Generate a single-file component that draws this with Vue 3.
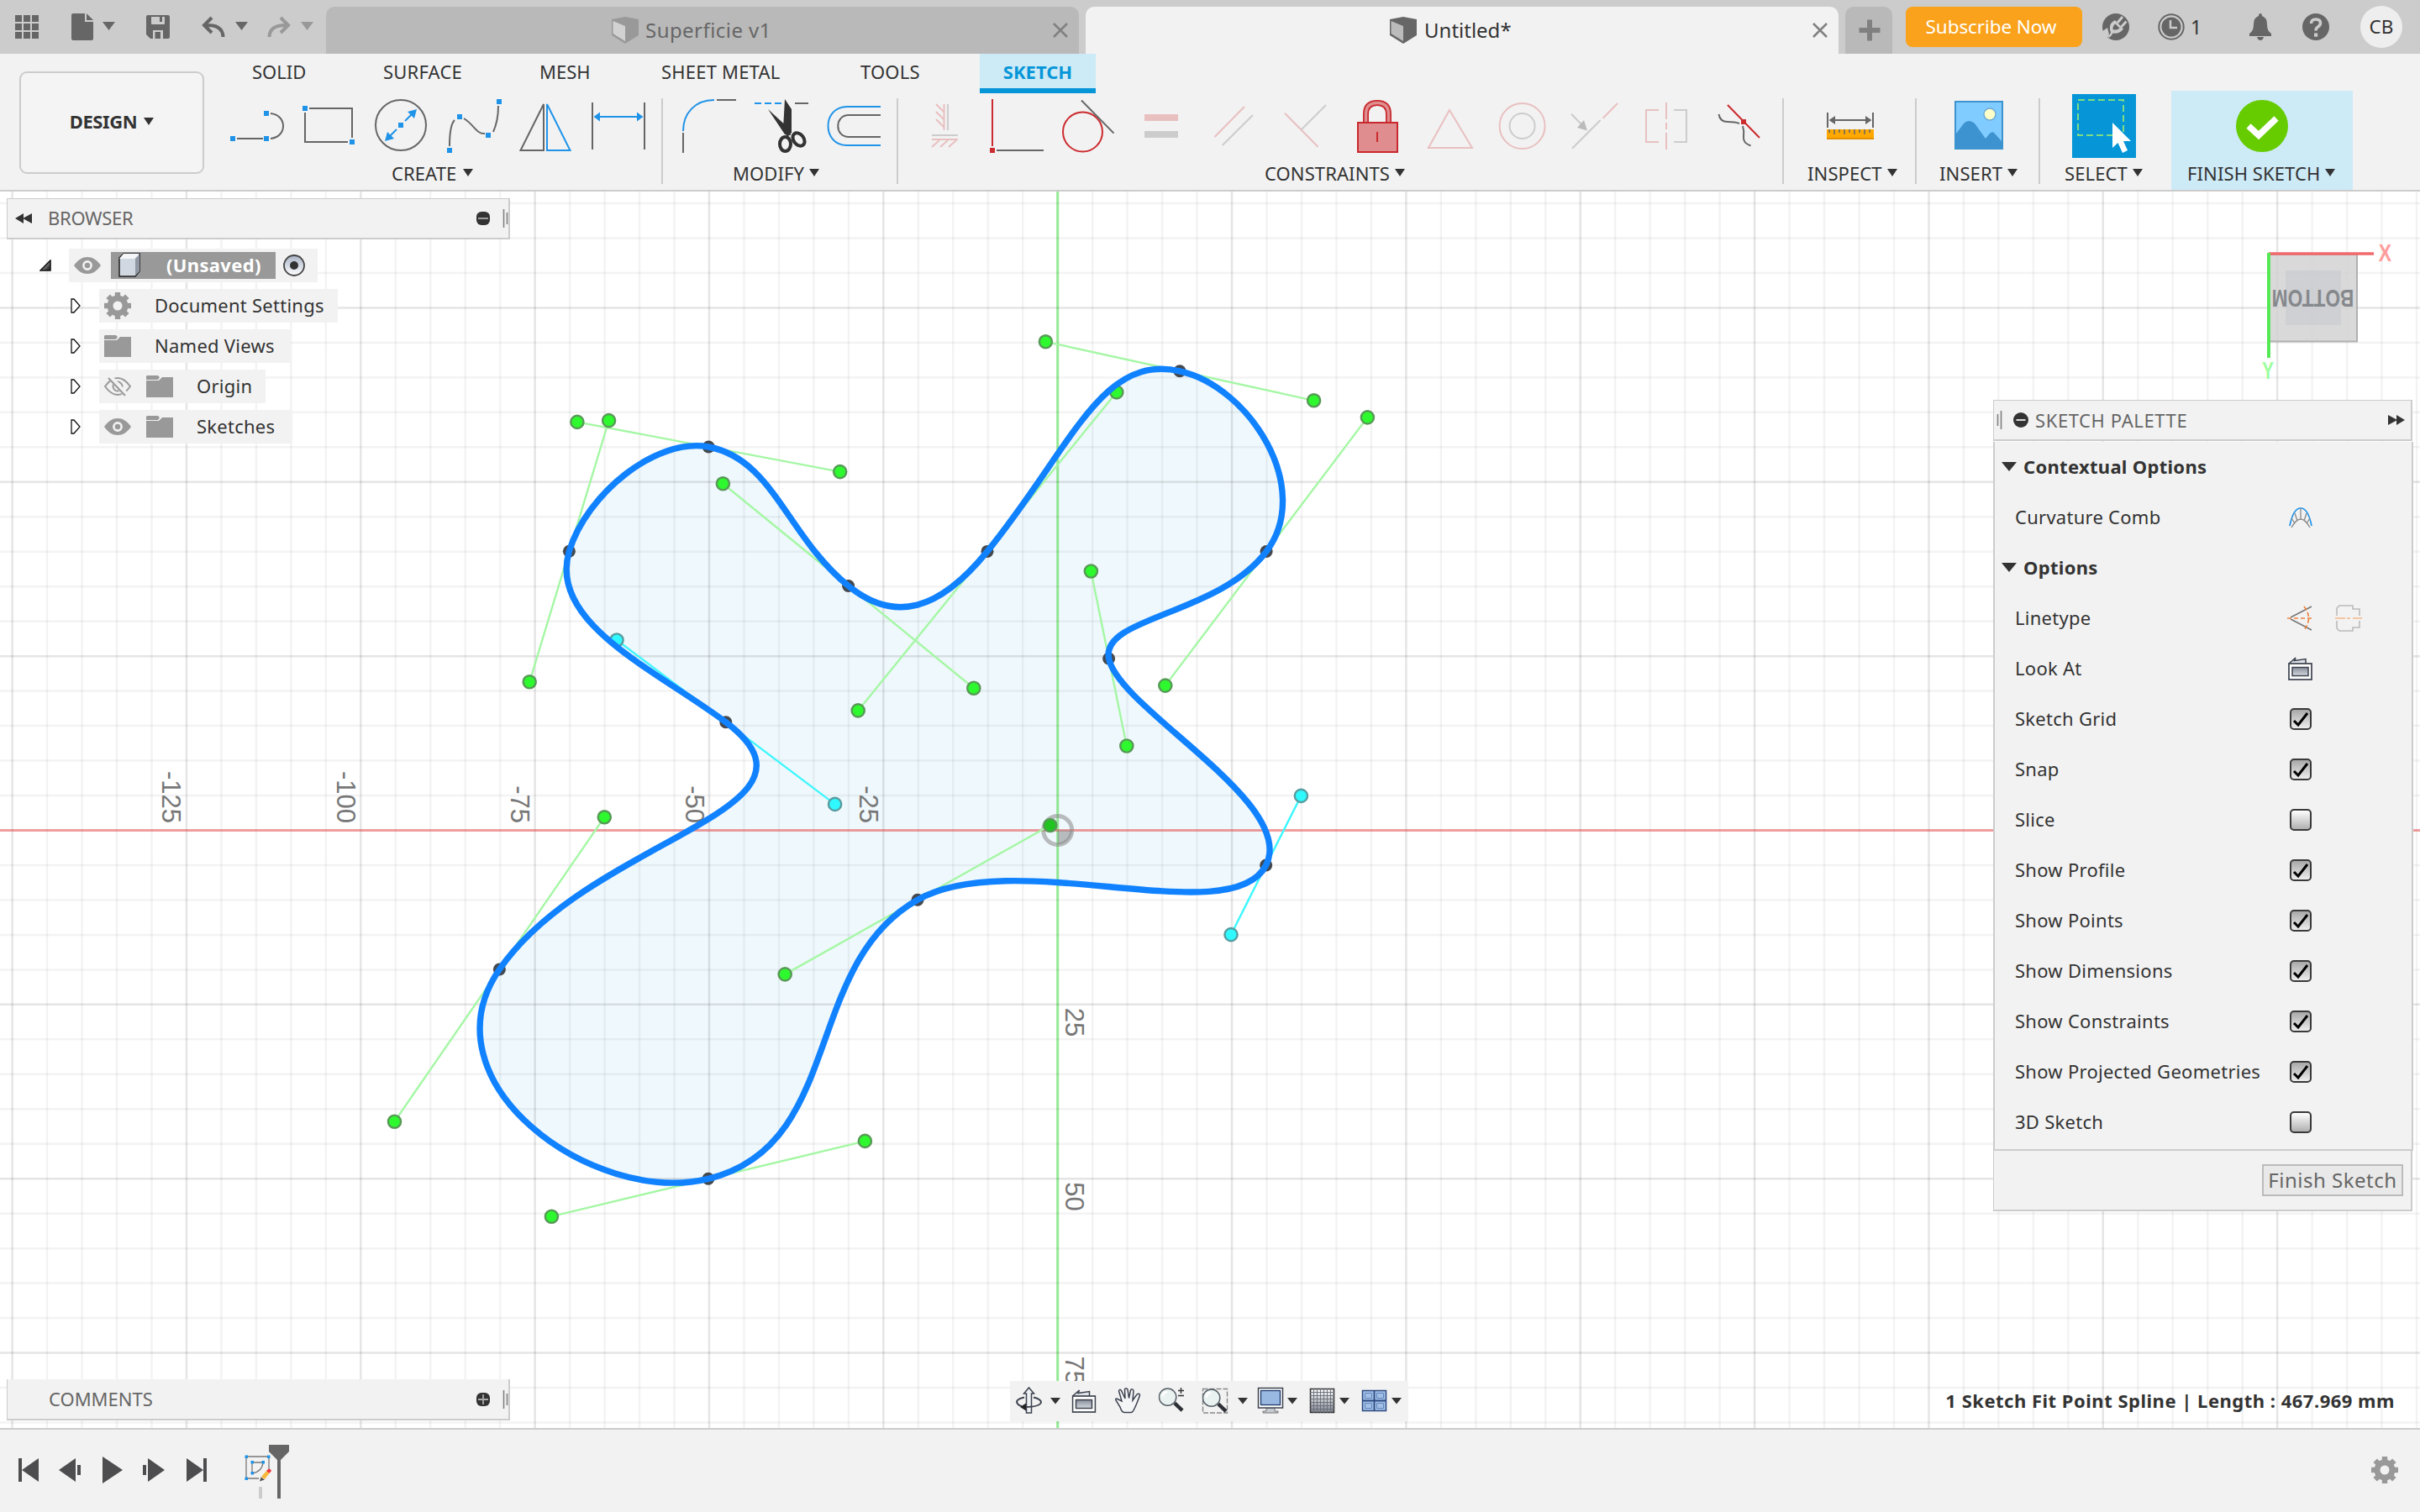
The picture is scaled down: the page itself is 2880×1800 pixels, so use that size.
<script setup>
const ORIGIN = { x: 1258.7, y: 988.5 }
const MAJOR = 207.35
const MINOR = MAJOR / 5

const gridX = []
for (let i = -30; i <= 39; i++) {
  gridX.push({ pos: ORIGIN.x + i * MINOR, major: i % 5 === 0, axis: i === 0 })
}
const gridY = []
for (let i = -18; i <= 17; i++) {
  gridY.push({ pos: ORIGIN.y + i * MINOR, major: i % 5 === 0, axis: i === 0 })
}

const xLabels = [-125, -100, -75, -50, -25].map((v, i) => ({
  text: String(v),
  x: ORIGIN.x + (i - 5) * MAJOR - 28.5,
  y: 980
}))
const yLabels = [25, 50, 75].map((v, i) => ({
  text: String(v),
  x: ORIGIN.x + 9,
  y: ORIGIN.y + (i + 1) * MAJOR + 4
}))

// Fit points with their tangent vectors; "out" / "in" override the chord-based weights.
const fitPoints = [
  { x: 1404, y: 441.8, dx: 159.6, dy: 35, in: 0.59, out: 0.52 },
  { x: 1507.1, y: 656.5, dx: -120.3, dy: 159.6, in: 0.47 },
  { x: 1319.6, y: 784, dx: 21.2, dy: 104, out: 0.58 },
  { x: 1506.7, y: 1030, dx: -41.7, dy: 82.6, in: 0.9, out: 0.97, active: true },
  { x: 1092, y: 1071.2, dx: -157.8, dy: 88.7, in: 0.73 },
  { x: 842.9, y: 1403.3, dx: -186.5, dy: 44.9 },
  { x: 594.4, y: 1154, dx: 124.9, dy: -181.2, out: 0.87 },
  { x: 863.8, y: 859.7, dx: -129.8, dy: -97.7, in: 1.08, out: 0.63, active: true },
  { x: 677.4, y: 656.2, dx: 47.2, dy: -155.6, in: 0.55 },
  { x: 843.3, y: 532, dx: 156.4, dy: 29.6, in: 0.4 },
  { x: 1009.6, y: 697.5, dx: 149.2, dy: 121.7, out: 0.37 },
  { x: 1175, y: 656.4, dx: 153.8, dy: -189.5, in: 0.37 }
]

const segments = fitPoints.map((p, i) => {
  const q = fitPoints[(i + 1) % fitPoints.length]
  const k = Math.hypot(q.x - p.x, q.y - p.y) * 0.0021
  const a = p.out ?? k
  const b = q.in ?? k
  return `C${p.x + p.dx * a} ${p.y + p.dy * a} ${q.x - q.dx * b} ${q.y - q.dy * b} ${q.x} ${q.y}`
})
const splinePath = `M${fitPoints[0].x} ${fitPoints[0].y}${segments.join('')}Z`

const menuTabs = ['SOLID', 'SURFACE', 'MESH', 'SHEET METAL', 'TOOLS', 'SKETCH']

const treeRows = [
  { label: 'Document Settings', icon: 'gear', cls: 'w1' },
  { label: 'Named Views', icon: 'folder', cls: 'w2' },
  { label: 'Origin', eye: 'off', icon: 'folder', cls: 'w3' },
  { label: 'Sketches', eye: 'on', icon: 'folder', cls: 'w4' }
]

const options = [
  { label: 'Sketch Grid', on: true },
  { label: 'Snap', on: true },
  { label: 'Slice', on: false },
  { label: 'Show Profile', on: true },
  { label: 'Show Points', on: true },
  { label: 'Show Dimensions', on: true },
  { label: 'Show Constraints', on: true },
  { label: 'Show Projected Geometries', on: true },
  { label: '3D Sketch', on: false }
]
const gearTeeth = [0, 45, 90, 135, 180, 225, 270, 315]
</script>

<template>
  <div class="app">
    <svg class="defs" width="0" height="0">
      <defs>
        <linearGradient id="slate" x1="0" y1="0" x2="0" y2="1"><stop offset="0" stop-color="#878e9a" /><stop offset="1" stop-color="#d5dae0" /></linearGradient>
        <linearGradient id="mesh" x1="0" y1="0" x2="0" y2="1"><stop offset="0" stop-color="#fff" /><stop offset="1" stop-color="#80858f" /></linearGradient>
        <linearGradient id="tri" x1="0" y1="0" x2="1" y2="1"><stop offset="0" stop-color="#fff" /><stop offset=".8" stop-color="#333" /></linearGradient>
        <linearGradient id="radio" x1="0" y1="0" x2="0" y2="1"><stop offset="0" stop-color="#a9b3c6" /><stop offset="1" stop-color="#fff" /></linearGradient>
        <symbol id="gear" viewBox="-16 -16 32 32">
          <circle r="9" fill="none" stroke="#999" stroke-width="7" />
          <rect v-for="a in gearTeeth" :key="a" x="-3.2" y="-16" width="6.4" height="8" fill="#999" :transform="`rotate(${a})`" />
        </symbol>
        <symbol id="folder" viewBox="0 0 32 26">
          <path d="M1 0H14L16 2L14 5H0V1Z" fill="#999" />
          <path d="M0 6H15L19 2H32V26H0Z" fill="#999" />
        </symbol>
        <symbol id="eye" viewBox="0 0 32 20">
          <path d="M0 10C5 3 10 0 16 0S27 3 32 10C27 17 22 20 16 20S5 17 0 10Z" fill="#999" />
          <circle cx="16" cy="10" r="4.6" fill="none" stroke="#f2f2f2" stroke-width="2.6" />
        </symbol>
        <symbol id="eyeoff" viewBox="0 0 32 24">
          <path d="M1 12C6 5 11 2 16 2S26 5 31 12C26 19 21 22 16 22S6 19 1 12Z" fill="none" stroke="#999" stroke-width="2" />
          <circle cx="16" cy="12" r="5.5" fill="none" stroke="#999" stroke-width="2" />
          <path d="M7 1L27 23" stroke="#f2f2f2" stroke-width="6" /><path d="M5 2L25 23" stroke="#999" stroke-width="2" />
        </symbol>
        <symbol id="lookat" viewBox="0 0 29 28">
          <path d="M1 8L9 1L7.5 4.5L21 2.5V8" fill="#dfe3e8" stroke="#3c424e" stroke-width="1.5" />
          <rect x="1" y="8" width="27" height="19" fill="#fff" stroke="#3c424e" stroke-width="1.7" />
          <rect x="5" y="12.5" width="19" height="10" fill="url(#slate)" stroke="#3c424e" stroke-width="1.5" />
        </symbol>
        <symbol id="glass" viewBox="0 0 32 32">
          <circle cx="11.5" cy="11.5" r="10.5" fill="#e9f2f0" stroke="#555e66" stroke-width="1.5" />
          <path d="M5 11A7 7 0 0 1 11 5" fill="none" stroke="#fff" stroke-width="2.5" />
          <path d="M20 19L29.5 28" stroke="#2c3036" stroke-width="4.5" />
        </symbol>
      </defs>
    </svg>

    <header class="titlebar">
      <div class="quick">
        <svg viewBox="0 0 388 64" width="388" height="64">
          <g fill="#666">
            <template v-for="r in 3" :key="r"><rect v-for="c in 3" :key="c" :x="8 + c * 10" :y="8 + r * 10" width="8" height="8" /></template>
            <path d="M85 18Q85 16 87 16H101V26H111V46Q111 48 109 48H87Q85 48 85 46Z" />
            <path d="M103 16L111 24H103Z" /><path d="M122 26H137L129.500 36Z" />
            <path fill-rule="evenodd" d="M176 18H200Q202 18 202 20V44Q202 46 200 46H179L174 41V20Q174 18 176 18ZM180 20V28Q180 29 181 29H195Q196 29 196 28V20H193V26H190V20ZM182 46H184.500V38H191V46H194V36H182Z" />
            <path d="M280 26H295L287.500 36Z" />
          </g>
          <path d="M252 21L243 30L252 39M244 30Q265 29 265.500 44" fill="none" stroke="#666" stroke-width="4" />
          <path d="M334 21L343 30L334 39M342 30Q321 29 320.500 44" fill="none" stroke="#999" stroke-width="4" />
          <path d="M358 26H373L365.500 36Z" fill="#999" />
        </svg>
      </div>
      <div class="tab idle">
        <svg class="cube1" viewBox="0 0 32 32" width="32" height="32"><path d="M0 3L16 0L32 3V22L16 32L0 22Z" fill="#999" /><path d="M1.500 5L16 11V29L1.500 20Z" fill="#d2d2d2" /></svg>
        <span class="t1">Superficie v1</span>
        <svg class="close" viewBox="0 0 18 18" width="18" height="18"><path d="M1 1L17 17M17 1L1 17" stroke="#808080" stroke-width="2.500" /></svg>
      </div>
      <div class="tab current">
        <svg class="cube2" viewBox="0 0 32 32" width="32" height="32"><path d="M0 3L16 0L32 3V22L16 32L0 22Z" fill="#666" /><path d="M1.500 5L16 11V29L1.500 20Z" fill="#bbb" /></svg>
        <span class="t2">Untitled*</span>
        <svg class="close" viewBox="0 0 18 18" width="18" height="18"><path d="M1 1L17 17M17 1L1 17" stroke="#808080" stroke-width="2.500" /></svg>
      </div>
      <div class="newtab"><svg viewBox="0 0 26 26" width="26" height="26"><path d="M13 .500V25.500M.500 13H25.500" stroke="#808080" stroke-width="6" /></svg></div>
      <button class="subscribe">Subscribe Now</button>
      <div class="status-icons">
        <svg class="i-plug" viewBox="0 0 32 32" width="32" height="32">
          <circle cx="16" cy="16" r="16" fill="#666" />
          <path d="M-1 22L6 17L8 25L5 31Z" fill="#ccc" />
          <path d="M7 28Q13 24 10.500 20" fill="none" stroke="#ccc" stroke-width="2.500" />
          <path d="M9 20Q8 11 15 8L25 18.500Q20 25 12 23.500Z" fill="#ccc" />
          <path d="M12.500 19Q12 14.500 15.500 12.500L20.500 17.500Q17.500 20.500 12.500 19Z" fill="#666" />
          <path d="M18 11L24 4M22.500 16L28.500 9.500" stroke="#ccc" stroke-width="3" />
        </svg>
        <svg class="i-clock" viewBox="0 0 32 32" width="32" height="32"><circle cx="16" cy="16" r="14.700" fill="none" stroke="#666" stroke-width="2" /><circle cx="16" cy="16" r="11.500" fill="#666" /><path d="M15 8V17H23" fill="none" stroke="#ccc" stroke-width="2.500" /></svg>
        <span class="jobs">1</span>
        <svg class="i-bell" viewBox="0 0 26 32" width="26" height="32"><path d="M11 3Q11 0 13 0T15 3Q21 5 21 13Q21 21 26 24V27H0V24Q5 21 5 13Q5 5 11 3ZM9 28H17Q16 32 13 32T9 28Z" fill="#666" /></svg>
        <svg class="i-help" viewBox="0 0 32 32" width="32" height="32"><circle cx="16" cy="16" r="16" fill="#666" /><path d="M10.500 12Q10.500 7 16 7T21.500 11.500Q21.500 14 18.500 16Q16 17.500 16 20.500" fill="none" stroke="#ccc" stroke-width="3.500" /><rect x="14" y="23.500" width="4.200" height="4.200" fill="#ccc" /></svg>
        <span class="avatar">CB</span>
      </div>
    </header>

    <section class="ribbon">
      <button class="design"><span>DESIGN</span><i class="caret"></i></button>
      <div class="ribbon-main">
        <nav class="menu">
          <span v-for="(t, i) in menuTabs" :key="t" :class="['m' + i, { sel: t === 'SKETCH' }]">{{ t }}</span>
        </nav>
        <div class="groups">
          <div class="group create">
            <div class="icons">
              <svg viewBox="264 108 86 84"><path d="M282 165H313M322 135C342 137 342 163 322 165" class="g" /><path d="M274 162h6v6h-6zM314 162h6v6h-6zM314 132h6v6h-6z" class="bf" /></svg>
              <svg viewBox="350 108 86 84"><path d="M368 129H419V164M363 134V169H414" class="g" /><path d="M360 126h6v6h-6zM416 166h6v6h-6z" class="bf" /></svg>
              <svg viewBox="436 108 86 84"><circle cx="477" cy="149" r="30" class="g" /><path d="M482 144L490 136M472 154L464 162" class="b" /><path d="M474 146h6v6h-6zM496 130L493 141L485 133ZM458 168L461 157L469 165Z" class="bf" /></svg>
              <svg viewBox="522 108 86 84"><path d="M535 174C535 158 537 147 541 143M552 141C564 148 567 160 577 159M587 157C592 146 593 138 593 126" class="g" /><path d="M591 118h6v6h-6zM544 136h6v6h-6zM578 158h6v6h-6zM532 176h6v6h-6z" class="bf" /></svg>
              <svg viewBox="608 108 86 84"><path d="M647 124V179H619.500Z" class="g" /><path d="M651 124V179H678.500Z" class="b" /></svg>
              <svg viewBox="694 108 86 84"><path d="M705 122V178M767 122V178" class="g" /><path d="M712 139H760" class="b" /><path d="M706.500 139L714 133.500V144.500ZM765.500 139L758 133.500V144.500Z" class="bf" /></svg>
            </div>
            <div class="label"><span>CREATE</span><i class="caret"></i></div>
          </div>
          <div class="group modify">
            <div class="icons">
              <svg viewBox="799 108 86 84"><path d="M813 156C813 135 827 119 850 119" class="b" /><path d="M853 119H876M813 158V182" class="g" /></svg>
              <svg viewBox="885 108 86 84"><path d="M898 123H930" class="b" stroke-dasharray="8 4" /><path d="M946 123H962" class="g" /><path d="M934 118L942 130V158L937 163L932 154ZM914 130L939 153L941 161L934 160Z" fill="#333" /><ellipse cx="934.500" cy="171.500" rx="6.500" ry="8.500" fill="none" stroke="#333" stroke-width="4" /><ellipse cx="950.500" cy="166" rx="6" ry="8.500" fill="none" stroke="#333" stroke-width="4" transform="rotate(-38 950.500 166)" /></svg>
              <svg viewBox="971 108 86 84"><path d="M1048 127H1008C978 127 978 173 1008 173H1048" class="b" /><path d="M1048 137H1010C993 137 993 163 1010 163H1048" class="g" /></svg>
            </div>
            <div class="label"><span>MODIFY</span><i class="caret"></i></div>
          </div>
          <div class="group constraints">
            <div class="icons">
              <svg viewBox="1082 108 86 84"><path d="M1123.500 124V155M1114 124L1123 133M1114 133L1123 142M1114 142L1123 151M1109 166H1140M1109 175L1118 167M1119 175L1128 167M1129 175L1138 167" class="p" /><path d="M1128 124V155M1109 161H1140" class="l" /></svg>
              <svg viewBox="1168 108 86 84"><path d="M1181 118V174" class="r" /><path d="M1178 176h6v6h-6z" class="rf" /><path d="M1186 179H1242" class="g" /></svg>
              <svg viewBox="1254 108 86 84"><circle cx="1288.500" cy="157" r="23.500" class="r" /><path d="M1287 119.500L1325.500 158.600" class="g" /></svg>
              <svg viewBox="1340 108 86 84"><path d="M1362 136h40v8h-40z" fill="#e9c0c0" /><path d="M1362 156h40v8h-40z" fill="#ccc" /></svg>
              <svg viewBox="1426 108 86 84"><path d="M1445.500 163L1481 127" class="p" /><path d="M1454.700 173L1491 137" class="l" /></svg>
              <svg viewBox="1512 108 86 84"><path d="M1529 134.700L1568.500 174.700" class="p" /><path d="M1549 154L1578 125" class="l" /></svg>
              <svg viewBox="1598 108 86 84"><path d="M1625.500 146V136Q1625.500 122.500 1639 122.500T1652.500 136V146" fill="none" stroke="#c9282d" stroke-width="7" /><path d="M1625.500 146V136Q1625.500 122.500 1639 122.500T1652.500 136V146" fill="none" stroke="#df8d8e" stroke-width="3.500" /><path d="M1616 146H1663V181H1616Z" fill="#df8d8e" stroke="#c9282d" stroke-width="2" /><path d="M1639 157V169" class="r" /></svg>
              <svg viewBox="1684 108 86 84"><path d="M1725 131L1752 176H1700Z" class="p" /></svg>
              <svg viewBox="1770 108 86 84"><circle cx="1811.600" cy="150" r="27" class="p" /><circle cx="1811.600" cy="150" r="15" class="l" /></svg>
              <svg viewBox="1856 108 86 84"><path d="M1871 176.700L1904.600 143M1870 135.700L1884 150" class="l" /><path d="M1889 155.500L1877 152L1885 143Z" fill="#bbb" /><path d="M1907.700 140.700L1925 123" class="p" /></svg>
              <svg viewBox="1942 108 86 84"><path d="M1974 131H1959V169H1974M1983 122V142M1983 146V154M1983 158V178" class="p" /><path d="M1992 131H2007V169H1992" class="l" /></svg>
              <svg viewBox="2028 108 86 84"><path d="M2045.500 136Q2047 145 2056 145T2070 147M2074 150Q2076 156 2075 163T2083.500 173.500" class="g" /><path d="M2056 125L2094 164" class="r" /><path d="M2072 142h6v6h-6z" class="rf" /></svg>
            </div>
            <div class="label"><span>CONSTRAINTS</span><i class="caret"></i></div>
          </div>
          <div class="group inspect">
            <div class="icons">
              <svg viewBox="2159 108 86 84"><path d="M2175 134V152M2229 134V152M2180 143H2224" class="g" /><path d="M2176.500 143L2184 138V148ZM2227.500 143L2220 138V148Z" fill="#666" /><path d="M2174 154h56v12h-56z" fill="#ffa900" /><path d="M2174 164h56v2h-56z" fill="#e29000" /><path d="M2177 154v4M2183 154v6M2189 154v4M2195 154v6M2201 154v4M2207 154v6M2213 154v4M2219 154v6M2225 154v4" stroke="#666" stroke-width="1.500" /></svg>
            </div>
            <div class="label"><span>INSPECT</span><i class="caret"></i></div>
          </div>
          <div class="group insert">
            <div class="icons">
              <svg viewBox="2312 108 86 84"><path d="M2326 120h58v58h-58z" fill="#3d93cf" /><path d="M2328 122H2382V168L2373 158Q2370 156 2367 160L2363 165L2350 147Q2343 141 2337 147L2328 159Z" fill="#80cbff" /><circle cx="2368" cy="136" r="7" fill="#ffffc9" stroke="#6fabd6" stroke-width="1.500" /></svg>
            </div>
            <div class="label"><span>INSERT</span><i class="caret"></i></div>
          </div>
          <div class="group select">
            <div class="icons">
              <svg viewBox="2461 108 86 84"><path d="M2466 112h76v76h-76z" fill="#0696d7" /><path d="M2473 119H2527V161H2473Z" fill="none" stroke="#7ddc84" stroke-width="2" stroke-dasharray="8 4" /><path d="M2514 146V176L2520.500 170L2526 182L2532 179L2527 168H2536Z" fill="#fff" /></svg>
            </div>
            <div class="label"><span>SELECT</span><i class="caret"></i></div>
          </div>
          <div class="group finish">
            <div class="icons">
              <svg viewBox="2649 108 86 84"><circle cx="2692" cy="150" r="31" fill="#6c0" /><path d="M2676 150L2688 161L2709 141" fill="none" stroke="#fff" stroke-width="7.500" /></svg>
            </div>
            <div class="label"><span>FINISH SKETCH</span><i class="caret"></i></div>
          </div>
        </div>
      </div>
    </section>

    <main class="viewport">
      <svg class="canvas" viewBox="0 228 2880 1472" width="2880" height="1472">
        <path :d="splinePath" fill="#eff8fc" />
        <g>
          <line v-for="g in gridX" :key="'x' + g.pos" :x1="g.pos" :x2="g.pos" y1="228" y2="1700" :class="g.axis ? 'ay' : g.major ? 'maj' : 'min'" />
          <line v-for="g in gridY" :key="'y' + g.pos" :y1="g.pos" :y2="g.pos" x1="0" x2="2880" :class="g.axis ? 'ax' : g.major ? 'maj' : 'min'" />
        </g>
        <circle :cx="ORIGIN.x" :cy="ORIGIN.y" r="17" fill="none" stroke="#888" stroke-opacity=".55" stroke-width="5" />
        <path :d="`M${ORIGIN.x} ${ORIGIN.y}h17a17 17 0 0 1 -17 17z`" fill="#888" fill-opacity=".55" />
        <text v-for="l in xLabels" :key="l.text" class="axis-label" text-anchor="end" :transform="`translate(${l.x} ${l.y}) rotate(90)`">{{ l.text }}</text>
        <text v-for="l in yLabels" :key="l.text" class="axis-label" :transform="`translate(${l.x} ${l.y}) rotate(90)`">{{ l.text }}</text>
        <line v-for="(p, i) in fitPoints" :key="'h' + i" :x1="p.x - p.dx" :y1="p.y - p.dy" :x2="p.x + p.dx" :y2="p.y + p.dy" :stroke="p.active ? '#3ff7ff' : '#a5f7a5'" stroke-width="2.400" />
        <template v-for="(p, i) in fitPoints" :key="'e' + i">
          <circle v-for="s in [-1, 1]" :key="s" :cx="p.x + s * p.dx" :cy="p.y + s * p.dy" r="7.600" :fill="p.active ? '#2ff8ff' : i === 4 && s === -1 ? '#1fc41f' : '#2ef82e'" :stroke="p.active ? '#569c9f' : '#579957'" stroke-width="2.400" />
          <circle :cx="p.x" :cy="p.y" r="7.500" fill="#44494f" />
        </template>
        <path :d="splinePath" fill="none" stroke="#1182ff" stroke-width="7.400" />
      </svg>

      <svg class="viewcube" viewBox="2680 280 180 180" width="180" height="180">
        <path d="M2701 303H2805V406.500H2701Z" fill="#d2d2d2" fill-opacity=".85" stroke="#b0b0b0" stroke-width="2" />
        <path d="M2720 322h66v65h-66z" fill="#c9ccd0" fill-opacity=".7" />
        <text class="face" text-anchor="middle" transform="translate(2752.500 345) rotate(180) scale(.78 1)">BOTTOM</text>
        <path d="M2700 302H2825" stroke="#f0696b" stroke-width="3.500" /><path d="M2700 301V426" stroke="#55ea55" stroke-width="4" />
        <text transform="translate(2838.500 311) scale(.82 1.050)" class="ax-name" text-anchor="middle" fill="#ff9d9d">X</text>
        <text transform="translate(2699 451) scale(.75 1.050)" class="ax-name" text-anchor="middle" fill="#9dff9d">Y</text>
      </svg>

      <aside class="browser">
        <div class="bar top">
          <svg class="chev" viewBox="0 0 20 12" width="20" height="12"><path d="M0 6L10 0V12ZM9 6L20 0V12Z" fill="#333" /></svg>
          <span class="bar-title">BROWSER</span>
          <svg class="knob" viewBox="0 0 16 16" width="16" height="16"><rect width="16" height="16" rx="6" fill="#333" /><path d="M2 8H14" stroke="#aaa" stroke-width="1.800" /></svg>
          <svg class="grip" viewBox="0 0 8 22" width="8" height="22"><path d="M1.500 0V22M5.500 4V18" stroke="#808080" stroke-width="1.600" /></svg>
        </div>
        <div class="node root">
          <svg class="arrow" viewBox="0 0 14 14" width="14" height="14"><path d="M13 1V13H1Z" fill="url(#tri)" stroke="#111" stroke-width="1.500" /></svg>
          <div class="chip">
            <svg width="32" height="20"><use href="#eye" width="32" height="20" /></svg>
            <div class="doc">
              <svg viewBox="0 0 26 30" width="26" height="30"><path d="M1 6L6 1H25V22L20 28H1Z" fill="#d2d8e1" stroke="#222" stroke-width="1.500" /><path d="M1 7H19L25 1H6Z" fill="#f4f6f8" /><path d="M20 7L25 2V22L20 27Z" fill="#9098a4" /></svg>
              <b>(Unsaved)</b>
            </div>
            <svg viewBox="0 0 28 28" width="28" height="28"><circle cx="14" cy="14" r="12" fill="url(#radio)" stroke="#444" stroke-width="1.800" /><circle cx="14" cy="14" r="5" fill="#333" /></svg>
          </div>
        </div>
        <div v-for="r in treeRows" :key="r.label" class="node child">
          <svg class="arrow" viewBox="0 0 12 18" width="12" height="18"><path d="M1 1V17H4L11 9L4 1Z" fill="#fff" stroke="#111" stroke-width="1.300" /></svg>
          <div :class="['chip', r.cls]">
            <svg v-if="r.eye === 'on'" class="eye" width="32" height="20"><use href="#eye" width="32" height="20" /></svg>
            <svg v-if="r.eye === 'off'" class="eye" width="32" height="24"><use href="#eyeoff" width="32" height="24" /></svg>
            <svg v-if="r.icon === 'gear'" width="32" height="32"><use href="#gear" width="32" height="32" /></svg>
            <svg v-else width="32" height="26"><use href="#folder" width="32" height="26" /></svg>
            <span>{{ r.label }}</span>
          </div>
        </div>
      </aside>

      <aside class="palette">
        <div class="pal-head">
          <svg class="grip" viewBox="0 0 8 22" width="8" height="22"><path d="M2.500 4V18M6.500 0V22" stroke="#808080" stroke-width="1.600" /></svg>
          <svg class="pk" viewBox="0 0 18 18" width="18" height="18"><circle cx="9" cy="9" r="9" fill="#333" /><path d="M3.500 9H14.500" stroke="#ddd" stroke-width="2" /></svg>
          <span class="pal-title">SKETCH PALETTE</span>
          <svg class="fwd" viewBox="0 0 20 12" width="20" height="12"><path d="M0 0L11 6L0 12ZM10 0L20 6L10 12Z" fill="#333" /></svg>
        </div>
        <div class="pal-body">
          <div class="sect"><i></i><span>Contextual Options</span></div>
          <div class="opt"><span>Curvature Comb</span>
            <svg class="oi" viewBox="0 0 30 26" width="30" height="26"><path d="M2 23C5 8 10 2 15 2S25 8 28 23" fill="none" stroke="#1f93e8" stroke-width="1.700" /><path d="M4 25C8 18 12 15 15 15S22 18 26 25M15 2V15M8 8L11 17M22 8L19 17M4 14L8 20M26 14L22 20" fill="none" stroke="#888" stroke-width="1.300" /></svg>
          </div>
          <div class="sect"><i></i><span>Options</span></div>
          <div class="opt"><span>Linetype</span>
            <svg class="oi lt" viewBox="0 0 32 32" width="32" height="32"><path d="M29 2L4 15M4 17L29 30" fill="none" stroke="#777" stroke-width="1.500" /><path d="M0 16H31M20 2Q31 16 20 30" fill="none" stroke="#ee8540" stroke-width="1.700" stroke-dasharray="5 3" /></svg>
            <svg class="oi2" viewBox="0 0 32 32" width="32" height="32"><path d="M2 13V4L5 1H21V5H29V13M2 19V28L5 31H21V27H29V19" fill="none" stroke="#bbb" stroke-width="1.600" /><path d="M0 16H12M14 16H18M21 16H32" stroke="#f3c6a4" stroke-width="1.800" /></svg>
          </div>
          <div class="opt"><span>Look At</span><svg class="oi" width="29" height="28"><use href="#lookat" width="29" height="28" /></svg></div>
          <div v-for="o in options" :key="o.label" class="opt">
            <span>{{ o.label }}</span>
            <div :class="['check', { on: o.on }]"><svg v-if="o.on" viewBox="0 0 22 22" width="22" height="22"><path d="M3 13L8 18L19 4" fill="none" stroke="#000" stroke-width="3" /></svg></div>
          </div>
        </div>
        <div class="pal-foot"><button>Finish Sketch</button></div>
      </aside>

      <div class="comments">
        <span class="bar-title">COMMENTS</span>
        <svg class="knob" viewBox="0 0 16 16" width="16" height="16"><rect width="16" height="16" rx="6" fill="#333" /><path d="M2 8H14M8 2V14" stroke="#aaa" stroke-width="1.800" /></svg>
        <svg class="grip" viewBox="0 0 8 22" width="8" height="22"><path d="M1.500 0V22M5.500 4V18" stroke="#808080" stroke-width="1.600" /></svg>
      </div>

      <div class="navbar">
        <svg viewBox="1202 1644 474 48" width="474" height="48">
          <path d="M1224.500 1652L1230.500 1659H1227.500V1682H1221.500V1659H1218.500Z" fill="#eef0f3" stroke="#3c424e" stroke-width="1.500" />
          <path d="M1219 1663.500C1212 1665 1210 1667 1210 1669Q1211 1673 1216 1674M1230 1663.500C1236 1665 1239 1667 1239 1669.500C1237 1674.500 1228 1675 1220 1675" fill="none" stroke="#3c424e" stroke-width="2" />
          <path d="M1214 1675L1221 1670.500V1679.500Z" fill="#222" />
          <path d="M1250 1664H1262L1256 1671.500Z" fill="#333" />
          <use href="#lookat" x="1275.500" y="1654" width="29" height="28" />
          <path d="M1328 1667Q1327 1665 1329 1665L1335 1668L1331.500 1656Q1332 1653 1334.500 1655.500L1339 1665L1338.500 1654Q1340 1651.500 1342 1654L1343.500 1664.500L1345.500 1655Q1347.500 1652.500 1349 1655.500L1348 1667L1353 1660Q1356 1658 1356.500 1661Q1353 1671 1350 1677Q1348 1681.500 1346 1681.500H1338Q1335 1681.500 1333 1675Z" fill="#f4f5f7" stroke="#3c424e" stroke-width="1.500" />
          <use href="#glass" x="1378.500" y="1652" width="31" height="31" /><path d="M1402 1655.500H1409M1405.500 1652V1659M1402 1661.500H1409" stroke="#333" stroke-width="1.400" />
          <path d="M1431.500 1653.500H1460.500V1682H1431.500Z" fill="none" stroke="#888" stroke-width="1.400" stroke-dasharray="6 2" />
          <use href="#glass" x="1430.500" y="1653" width="31" height="31" />
          <path d="M1473 1664H1485L1479 1671.500Z" fill="#333" />
          <path d="M1507 1676H1517V1680H1521V1682H1503V1680H1507Z" fill="#c6cad1" stroke="#777" stroke-width="1" />
          <rect x="1497.500" y="1652.500" width="29" height="23.500" fill="#fff" stroke="#3c424e" stroke-width="1.500" /><rect x="1500.500" y="1655.500" width="23" height="17" fill="#9ab9e2" stroke="#1d3a6c" stroke-width="1.300" />
          <path d="M1532 1664H1544L1538 1671.500Z" fill="#333" />
          <rect x="1559.500" y="1653.500" width="28" height="28" fill="url(#mesh)" stroke="#333" stroke-width="1.500" />
          <path d="M1563.500 1653V1682M1567.500 1653V1682M1571.500 1653V1682M1575.500 1653V1682M1579.500 1653V1682M1583.500 1653V1682M1559 1657.500H1588M1559 1661.500H1588M1559 1665.500H1588M1559 1669.500H1588M1559 1673.500H1588M1559 1677.500H1588" stroke="#666c78" stroke-width=".9" />
          <path d="M1594 1664H1606L1600 1671.500Z" fill="#333" />
          <rect x="1621.500" y="1655.500" width="28" height="24" fill="#a3bfe6" stroke="#2c4a80" stroke-width="1.500" /><path d="M1635.500 1655V1680M1621 1667.500H1650" stroke="#2c4a80" stroke-width="1.800" />
          <path d="M1624.500 1658.500h8v6h-8zM1638.500 1658.500h8v6h-8zM1624.500 1670.500h8v6h-8zM1638.500 1670.500h8v6h-8z" fill="none" stroke="#5f86bd" stroke-width="1" />
          <path d="M1656 1664H1668L1662 1671.500Z" fill="#333" />
        </svg>
      </div>
      <div class="readout">1 Sketch Fit Point Spline | Length : 467.969 mm</div>
    </main>

    <footer class="timeline">
      <svg viewBox="0 1702 360 98" width="360" height="98">
        <g fill="#4d4d4f">
          <path d="M22 1736h4v28h-4zM46 1736V1764L26 1750ZM90 1736V1764L70 1750ZM92 1744h4v12h-4zM122 1734L146 1750L122 1766ZM170 1744h4v12h-4zM176 1736V1764L196 1750ZM222 1736V1764L242 1750ZM242 1736h4v28h-4z" />
        </g>
        <path d="M293 1734H320V1750M293 1734V1760H308M300 1741H313Q312 1752 300 1754Z" fill="none" stroke="#777" stroke-width="1.300" />
        <path d="M291.500 1732.500h3.500v3.500h-3.500zM318 1732.500h3.500v3.500h-3.500zM291.500 1758.500h3.500v3.500h-3.500zM298.500 1739h3.500v3.500h-3.500zM311.500 1739h3.500v3.500h-3.500zM298.500 1752h3.500v3.500h-3.500z" fill="#1f93e8" />
        <path d="M311 1758L317 1751L320.500 1754L315 1761Z" fill="#f8b83c" /><path d="M317 1751Q321 1746 323 1751L320.500 1754Z" fill="#f0353b" /><path d="M310.500 1758.500L315 1761.500L309 1763.500Z" fill="#555" />
        <path d="M308 1770h4v14h-4z" fill="#ccc" />
        <path d="M320 1720H344V1728L334 1738V1784H330V1738L320 1728Z" fill="#666" />
      </svg>
      <svg class="tgear" width="32" height="32"><use href="#gear" width="32" height="32" /></svg>
    </footer>
  </div>
</template>

<style>
body { margin: 0; overflow: hidden; background: #fff; }
</style>

<style scoped>
.app { width: 2880px; height: 1800px; display: flex; flex-direction: column; font-family: "Noto Sans", "Open Sans", sans-serif; font-size: 22px; color: #333; overflow: hidden; }
.defs { position: absolute; }
svg { display: block; flex: none; }
button { font: inherit; color: inherit; padding: 0; margin: 0; border: 0; }

.titlebar { height: 64px; flex: none; background: #ccc; display: flex; align-items: flex-end; }
.quick { width: 388px; height: 64px; }
.tab { width: 896px; height: 56px; border-radius: 10px 10px 0 0; display: flex; align-items: center; font-size: 24px; box-sizing: border-box; }
.tab.idle { background: #b9b9b9; color: #666; margin-right: 8px; }
.tab.current { background: #f2f2f2; color: #333; margin-right: 8px; }
.tab span { line-height: 56px; }
.cube1 { margin-left: 340px; } .cube2 { margin-left: 362px; }
.t1, .t2 { margin-left: 8px; }
.t1 { letter-spacing: .45px; }
.t2 { margin-left: 9px; }
.close { margin-left: auto; margin-right: 13px; }
.newtab { width: 56px; height: 56px; background: #b9b9b9; border-radius: 10px 10px 0 0; display: flex; align-items: center; justify-content: center; margin-right: 16px; }
.newtab svg { margin-left: 2px; }
.subscribe { width: 210px; height: 48px; border-radius: 8px; background: #faa21b; color: #fff; font-size: 22.500px; letter-spacing: -.1px; align-self: center; padding: 0 7px 1px 0; }
.status-icons { display: flex; align-items: center; height: 64px; }
.i-plug { margin-left: 24px; } .i-clock { margin-left: 34px; }
.jobs { margin-left: 7px; width: 14px; font-size: 23px; }
.i-bell { margin-left: 56px; } .i-help { margin-left: 37px; }
.avatar { margin-left: 37px; width: 50px; height: 50px; border-radius: 50%; background: #eee; text-align: center; line-height: 49px; font-size: 22.500px; }

.ribbon { height: 162px; flex: none; background: #f2f2f2; border-bottom: 2px solid #ccc; display: flex; align-items: flex-start; }
.design { box-sizing: border-box; width: 220px; height: 122px; margin: 21px 21px 0 23px; border: 2px solid #ccc; border-radius: 9px; background: #f4f4f4; display: flex; align-items: center; justify-content: center; font-size: 22px; font-weight: 700; letter-spacing: -.4px; padding-bottom: 4px; }
.caret { width: 0; height: 0; border: 6px solid transparent; border-top: 9px solid #333; border-bottom: 0; margin-left: 8px; }
.ribbon-main { flex: 1; }
.menu { height: 44px; display: flex; }
.menu span { line-height: 42px; white-space: nowrap; }
.m0 { margin-left: 36px; width: 156px; } .m1 { width: 186px; letter-spacing: .2px; } .m2 { width: 145px; } .m3 { width: 237px; letter-spacing: .2px; } .m4 { width: 142px; letter-spacing: .2px; }
.menu .sel { width: 138px; height: 41px; text-align: center; background: #cdeaf7; color: #0696d7; font-weight: 700; border-bottom: 6px solid #0696d7; }
.groups { display: flex; height: 118px; }
.group { height: 118px; box-sizing: border-box; position: relative; }
.icons { display: flex; height: 84px; }
.icons svg { width: 86px; height: 84px; }
.label { display: flex; align-items: center; height: 28px; font-size: 22px; white-space: nowrap; line-height: 28px; letter-spacing: .1px; }
.label .caret { margin-left: 6px; margin-top: -1px; }
.group:not(.select):not(.finish)::after { content: ""; position: absolute; right: 0; top: 9px; width: 2px; height: 102px; background: #ccc; }
.create { width: 525px; } .create .label { margin-left: 202px; } .create .caret { margin-left: 8px; }
.modify { width: 280px; } .modify .icons { margin-left: 10px; } .modify .label { margin-left: 83px; }
.constraints { width: 1054px; } .constraints .icons { margin-left: 13px; } .constraints .label { margin-left: 436px; }
.inspect { width: 158px; } .inspect .icons { margin-left: 36px; } .inspect .label { margin-left: 28px; }
.insert { width: 147px; } .insert .icons { margin-left: 31px; } .insert .label { margin-left: 27px; }
.select { width: 156px; } .select .icons { margin-left: 33px; } .select .label { margin-left: 29px; }
.finish { width: 216px; background: #cdeaf7; } .finish .icons { margin-left: 65px; } .finish .label { margin-left: 19px; }
.g { fill: none; stroke: #666; stroke-width: 2; }
.b { fill: none; stroke: #1f93e8; stroke-width: 2; }
.bf { fill: #1f93e8; }
.r { fill: none; stroke: #cc2b2f; stroke-width: 2; }
.rf { fill: #cc2b2f; }
.p { fill: none; stroke: #e9c0c0; stroke-width: 2; }
.l { fill: none; stroke: #ccc; stroke-width: 2; }

.viewport { position: relative; height: 1472px; flex: none; background: #fff; }
.canvas { position: absolute; left: 0; top: 0; }
.min { stroke: #000; stroke-opacity: .048; stroke-width: 2.500; }
.maj { stroke: #000; stroke-opacity: .1; stroke-width: 2.500; }
.ax { stroke: #e23b3b; stroke-opacity: .5; stroke-width: 2.800; }
.ay { stroke: #4fdc4f; stroke-opacity: .6; stroke-width: 3; }
.axis-label { font-family: "Liberation Sans", Arial, sans-serif; font-size: 31px; fill: #777; }
.viewcube { position: absolute; left: 2680px; top: 52px; overflow: visible; }
.face { font-family: "Liberation Sans", Arial, sans-serif; font-weight: 700; font-size: 29px; fill: #85888c; }
.ax-name { font-family: "Liberation Sans", Arial, sans-serif; font-weight: 700; font-size: 28px; }

.browser { position: absolute; left: 8px; top: 8px; width: 600px; }
.bar, .comments { display: flex; align-items: center; box-sizing: border-box; height: 49px; width: 599px; background: #f2f2f2; border: 1px solid #ccc; border-right-width: 2px; border-bottom-width: 2px; color: #666; }
.chev { margin-left: 9px; width: 20px; }
.bar-title { margin-left: 19px; margin-top: -2px; font-size: 22px; }
.bar .bar-title { letter-spacing: -.3px; }
.knob { margin-left: auto; margin-right: 15px; }
.bar .grip, .comments .grip { margin-right: -1px; }
.node { display: flex; align-items: center; height: 40px; margin-bottom: 8px; color: #333; }
.node.root { margin-top: 11px; }
.root .arrow { margin: 0 21px 0 39px; }
.child .arrow { margin: 0 22px 0 76px; }
.chip { background: #f2f2f2; height: 40px; display: flex; align-items: center; box-sizing: border-box; padding-left: 6px; letter-spacing: .25px; white-space: nowrap; }
.root .chip { width: 296px; }
.doc { background: #999; color: #fff; width: 196px; height: 32px; margin: 0 8px 0 12px; display: flex; align-items: center; }
.doc svg { margin-left: 9px; }
.doc b { margin-left: 31px; margin-top: -2px; font-weight: 700; letter-spacing: .35px; }
.chip > span { margin-left: 28px; margin-top: -2px; }
.eye { margin-right: 18px; }
.w1 { width: 284px; } .w2 { width: 228px; } .w3 { width: 198px; } .w4 { width: 230px; }

.comments { position: absolute; left: 8px; top: 1414px; border-top: 0; }
.comments .bar-title { margin-left: 49px; margin-top: -1px; }

.palette { position: absolute; left: 2372px; top: 248px; width: 500px; letter-spacing: .27px; }
.pal-head { box-sizing: border-box; width: 499px; height: 49px; background: #f2f2f2; border: 1px solid #ccc; border-right-width: 2px; border-bottom-width: 2px; display: flex; align-items: center; color: #666; }
.pal-head .grip { margin-left: 2px; }
.pk { margin-left: 13px; }
.pal-title { margin-left: 8px; margin-top: -1px; letter-spacing: .6px; }
.fwd { margin-left: auto; margin-right: 7px; }
.pal-body { box-sizing: border-box; margin-top: 1px; height: 844px; width: 500px; background: #f2f2f2; border: 2px solid #ccc; border-top: 0; border-bottom-width: 2px; }
.sect { height: 60px; display: flex; align-items: center; font-weight: 700; letter-spacing: .3px; }
.sect span { margin-top: -2px; }
.sect i { border: 9px solid transparent; border-top: 11px solid #333; border-bottom: 0; margin: -1px 8px 0 8px; }
.opt { height: 60px; display: flex; align-items: center; }
.opt > span { width: 327px; margin-left: 24px; margin-top: -2px; white-space: nowrap; }
.oi { margin-left: -2px; }
.lt { margin-left: -3px; }
.oi2 { margin-left: 25px; }
.check { box-sizing: border-box; width: 26px; height: 26px; border: 2px solid #3a3a3a; border-radius: 5px; background: linear-gradient(#fff, #b0b0b0); margin-top: -1px; }
.check.on { background: linear-gradient(#a8a8a8, #ededed); }
.pal-foot { box-sizing: border-box; width: 499px; height: 72px; background: #f2f2f2; border: 1px solid #ccc; border-top: 0; border-right-width: 2px; border-bottom-width: 2px; display: flex; justify-content: flex-end; padding: 16px 9px 0 0; }
.pal-foot button { box-sizing: border-box; width: 168px; height: 38px; border: 2px solid #bbb; background: #e9e9e9; color: #666; font-size: 24px; line-height: 32px; letter-spacing: .5px; white-space: nowrap; }

.navbar { position: absolute; left: 1202px; top: 1416px; width: 474px; height: 48px; background: #f2f2f2; }
.readout { position: absolute; right: 30px; top: 1424px; font-weight: 700; line-height: 30px; letter-spacing: .5px; white-space: nowrap; }

.timeline { box-sizing: border-box; height: 100px; flex: none; background: #f2f2f2; border-top: 2px solid #ccc; display: flex; justify-content: space-between; align-items: center; }
.tgear { margin-right: 26px; margin-bottom: 2px; }
</style>
